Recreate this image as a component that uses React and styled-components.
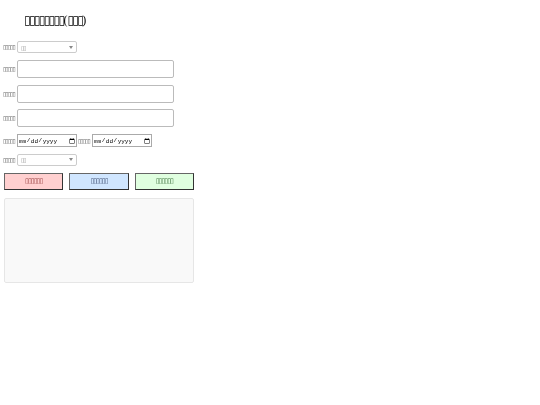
import styled, {createGlobalStyle} from 'styled-components';

// The reference only shows missing-glyph boxes, its wording can't be read.
// The rectangle character stands in for them, one per box counted.
const Boxes = ({n}) => <Tofu>{'\u25AF'.repeat(n)}</Tofu>

const arrow = `url("data:image/svg+xml,%3Csvg xmlns='http://www.w3.org/2000/svg' width='8' height='6'%3E%3Cpath d='M0 0h8L4 6z' fill='%23888'/%3E%3C/svg%3E")`

const GlobalStyle = createGlobalStyle`
    html, body {
        margin: 0;
        background: #fff;
    }
    body {
        font-family: "Liberation Serif", serif;
    }
`

const Field = ({label, children}) => (
    <Row>
        <Label><Boxes n={label} /></Label>
        {children}
    </Row>
)

const Picker = () => (
    <Select>
        <option>{'\u25AF\u25AF'}</option>
    </Select>
)

const App = () => (
    <Page>
        <GlobalStyle />
        <Title><Boxes n={8} />(<Boxes n={3} />)</Title>
        <Field label={5}><Picker /></Field>
        <Field label={5}><TextInput /></Field>
        <Field label={5}><TextInput /></Field>
        <Field label={5}><TextInput /></Field>
        <Field label={5}>
            <DateInput type="date" />
            <Label><Boxes n={5} /></Label>
            <DateInput type="date" />
        </Field>
        <Field label={5}><Picker /></Field>
        <Buttons>
            <ActionButton $bg="#ffd0d0" $color="#994444"><Boxes n={6} /></ActionButton>
            <ActionButton $bg="#d0e6ff" $color="#445577"><Boxes n={6} /></ActionButton>
            <ActionButton $bg="#e0ffe0" $color="#447744"><Boxes n={6} /></ActionButton>
        </Buttons>
        <Output />
    </Page>
)

// everything below is in double size, the page is zoomed to half
const Page = styled.div`
    zoom: 0.5;
    width: 382px;
    padding: 26px 0 0 6px;
    filter: blur(0.6px);
`

const Tofu = styled.span`
    font-family: "DejaVu Sans", sans-serif;
    letter-spacing: -0.14em;
`

const Title = styled.h1`
    margin: 0 0 28px 42px;
    font-size: 24px;
    line-height: 28px;
    font-weight: 400;
    color: #000;
`

const Row = styled.div`
    display: flex;
    align-items: center;
    gap: 2px;
    margin-bottom: 13.5px;
`

const Label = styled.label`
    width: 26px;
    font-size: 11.5px;
    color: #666;
    white-space: nowrap;
`

const Select = styled.select`
    appearance: none;
    width: 120px;
    height: 24px;
    padding: 0 6px;
    font-size: 12px;
    font-family: "DejaVu Sans", sans-serif;
    letter-spacing: -2px;
    color: #999;
    background: #fff ${arrow} no-repeat right 6px center;
    border: 1px solid #ccc;
    border-radius: 4px;
`

const TextInput = styled.input`
    box-sizing: border-box;
    width: 314px;
    height: 36px;
    border: 2px solid #bbb;
    border-radius: 4px;
`

const DateInput = styled.input`
    box-sizing: border-box;
    width: 120px;
    height: 26px;
    font-size: 12px;
    font-family: "Liberation Mono", monospace;
    border: 2px solid #aaa;
`

const Buttons = styled.div`
    display: flex;
    gap: 12px;
    width: 380px;
    margin: 0 0 16px 2px;
`

const ActionButton = styled.button`
    flex: 1;
    height: 34px;
    padding: 0;
    font-size: 14px;
    font-family: "Liberation Serif", serif;
    color: ${p => p.$color};
    background: ${p => p.$bg};
    border: 2px solid #444;
    border-color: #666 #333 #333 #666;
`

const Output = styled.div`
    box-sizing: border-box;
    width: 380px;
    height: 170px;
    margin-left: 2px;
    background: #f9f9f9;
    border: 2px solid #e6e6e6;
    border-radius: 4px;
`

export default App
